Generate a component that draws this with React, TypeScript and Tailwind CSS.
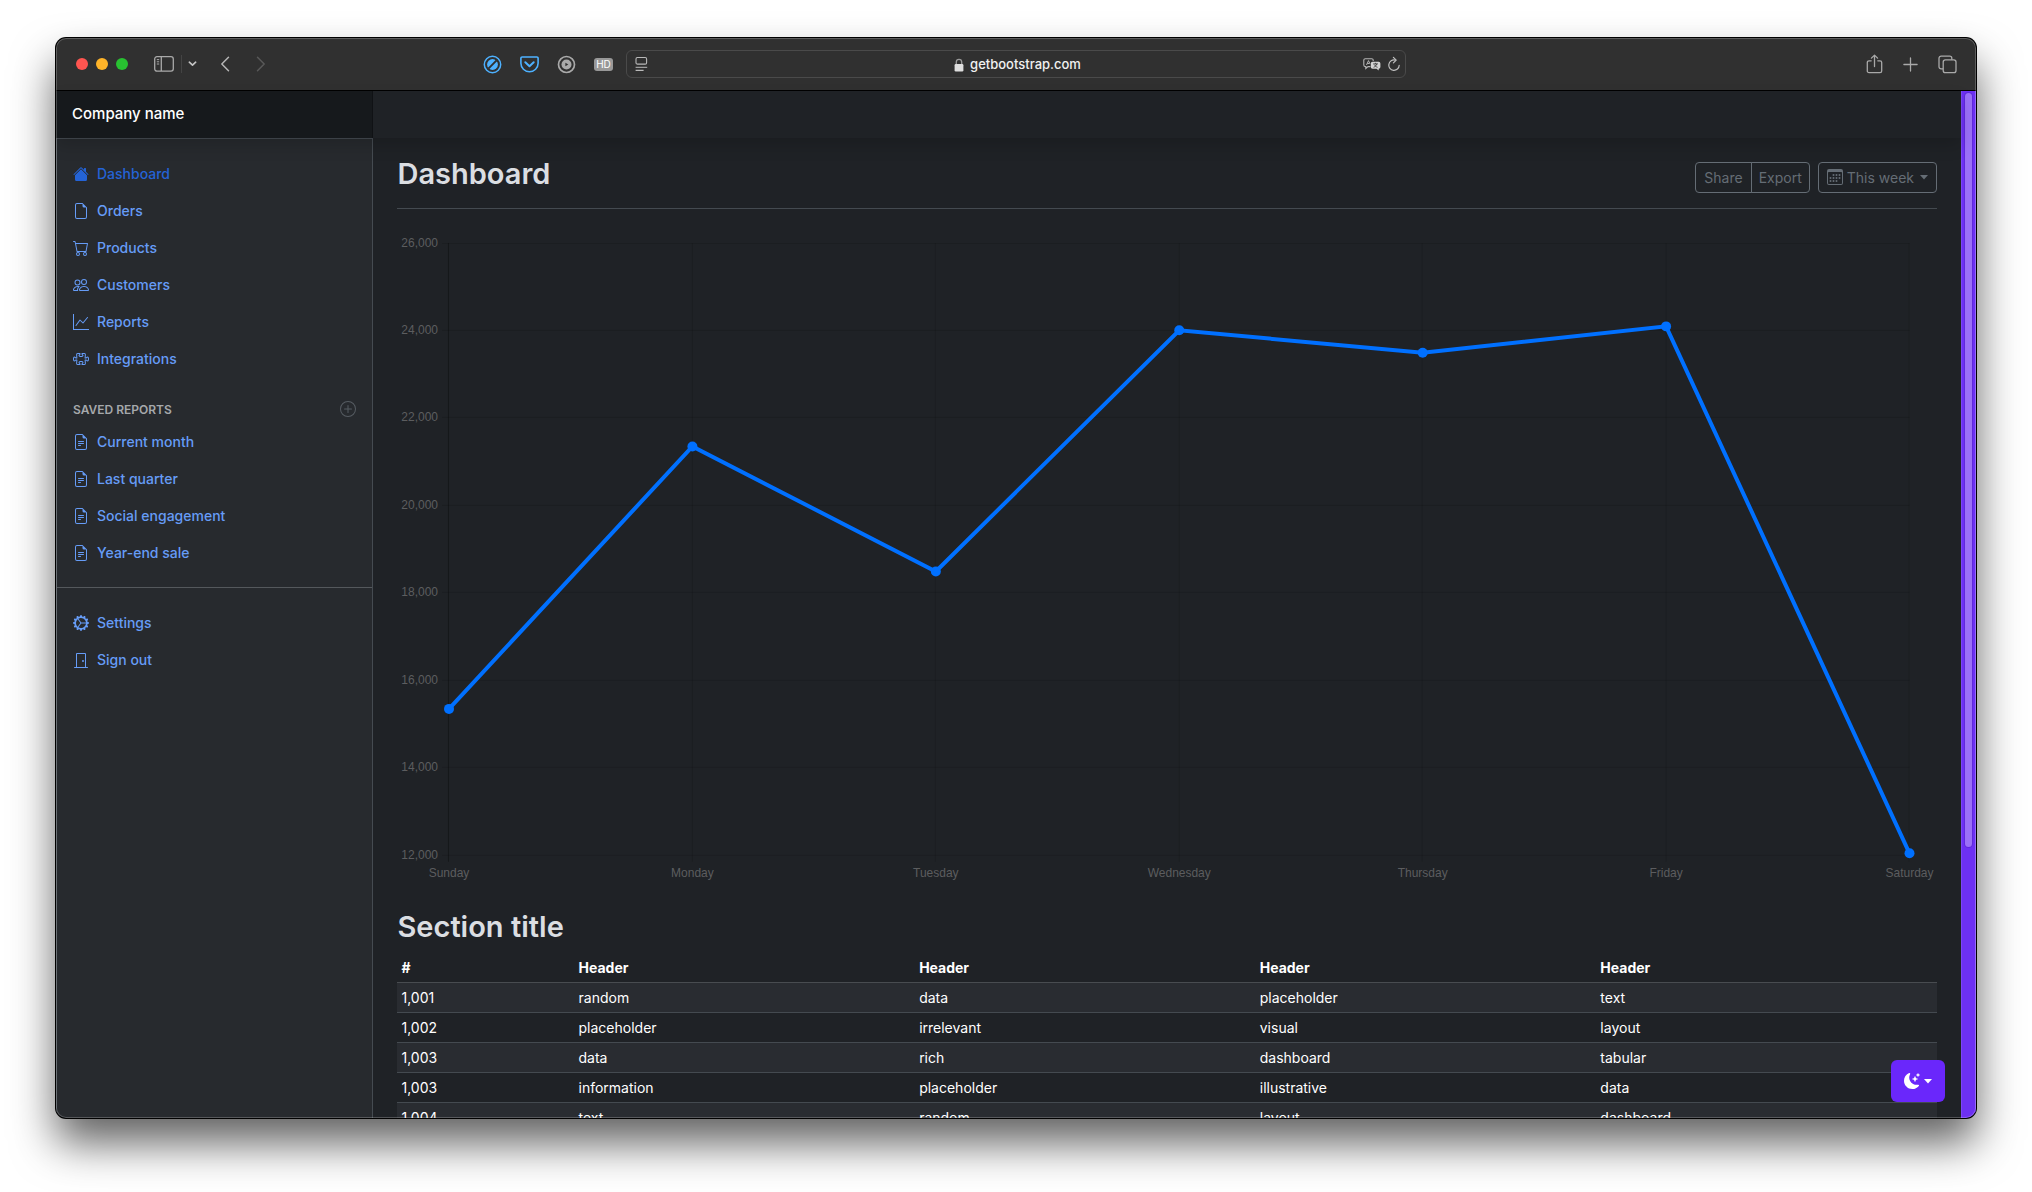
import type { ReactNode } from "react";
import {
  BsCalendar3,
  BsCart,
  BsDoorClosed,
  BsFileEarmark,
  BsFileEarmarkText,
  BsGearWideConnected,
  BsGraphUp,
  BsHouseFill,
  BsMoonStarsFill,
  BsPeople,
  BsPlusCircle,
  BsPuzzle,
} from "react-icons/bs";

type NavEntry = { label: string; icon: ReactNode; active?: boolean };

const mainNav: NavEntry[] = [
  { label: "Dashboard", icon: <BsHouseFill />, active: true },
  { label: "Orders", icon: <BsFileEarmark /> },
  { label: "Products", icon: <BsCart /> },
  { label: "Customers", icon: <BsPeople /> },
  { label: "Reports", icon: <BsGraphUp /> },
  { label: "Integrations", icon: <BsPuzzle /> },
];

const savedReports: NavEntry[] = [
  { label: "Current month", icon: <BsFileEarmarkText /> },
  { label: "Last quarter", icon: <BsFileEarmarkText /> },
  { label: "Social engagement", icon: <BsFileEarmarkText /> },
  { label: "Year-end sale", icon: <BsFileEarmarkText /> },
];

const accountNav: NavEntry[] = [
  { label: "Settings", icon: <BsGearWideConnected /> },
  { label: "Sign out", icon: <BsDoorClosed /> },
];

const rows = [
  ["1,001", "random", "data", "placeholder", "text"],
  ["1,002", "placeholder", "irrelevant", "visual", "layout"],
  ["1,003", "data", "rich", "dashboard", "tabular"],
  ["1,003", "information", "placeholder", "illustrative", "data"],
  ["1,004", "text", "random", "layout", "dashboard"],
];

const series = [
  { day: "Sunday", value: 15339 },
  { day: "Monday", value: 21345 },
  { day: "Tuesday", value: 18483 },
  { day: "Wednesday", value: 24003 },
  { day: "Thursday", value: 23489 },
  { day: "Friday", value: 24092 },
  { day: "Saturday", value: 12034 },
];

const ticks = [26000, 24000, 22000, 20000, 18000, 16000, 14000, 12000];

const chart = { left: 52, right: 1513, top: 10, bottom: 622 };

const xOf = (index: number) =>
  chart.left + (index * (chart.right - chart.left)) / (series.length - 1);
const yOf = (value: number) =>
  chart.top + ((26000 - value) * (chart.bottom - chart.top)) / 14000;

function LineChart() {
  return (
    <svg
      viewBox="0 0 1540 650"
      className="my-6 block h-auto w-full"
      role="img"
      aria-label="Orders per weekday"
    >
      <g stroke="#000" strokeOpacity="0.12" strokeWidth="1">
        {ticks.map((t) => (
          <line
            key={t}
            x1={chart.left - 7}
            x2={chart.right}
            y1={Math.floor(yOf(t)) + 0.5}
            y2={Math.floor(yOf(t)) + 0.5}
          />
        ))}
        {series.map((p, i) => (
          <line
            key={p.day}
            x1={Math.round(xOf(i)) - 0.5}
            x2={Math.round(xOf(i)) - 0.5}
            y1={chart.top}
            y2={chart.bottom + 7}
            strokeOpacity={i === 0 ? 0.3 : 0.12}
          />
        ))}
      </g>
      <g fill="#5c5d5f" className="font-['Liberation_Sans',sans-serif] text-[12px]">
        {ticks.map((t) => (
          <text key={t} x={chart.left - 11} y={Math.floor(yOf(t)) + 4} textAnchor="end">
            {t.toLocaleString("en-US")}
          </text>
        ))}
        {series.map((p, i) => (
          <text key={p.day} x={xOf(i)} y={chart.bottom + 22} textAnchor="middle">
            {p.day}
          </text>
        ))}
      </g>
      <polyline
        points={series.map((p, i) => `${xOf(i)},${yOf(p.value)}`).join(" ")}
        fill="none"
        stroke="#0070ff"
        strokeWidth="4"
      />
      {series.map((p, i) => (
        <circle key={p.day} cx={xOf(i)} cy={yOf(p.value)} r="5" fill="#0070ff" />
      ))}
    </svg>
  );
}

function NavList({ entries }: { entries: NavEntry[] }) {
  return (
    <ul className="flex flex-col">
      {entries.map((e) => (
        <li key={e.label}>
          <a
            href="#"
            aria-current={e.active ? "page" : undefined}
            className={
              e.active
                ? "flex items-center gap-2 px-4 py-2 text-sm leading-[21px] font-medium text-[#2463d6]"
                : "flex items-center gap-2 px-4 py-2 text-sm leading-[21px] font-medium text-[#669cf7]"
            }
          >
            <span className="text-base">{e.icon}</span>
            {e.label}
          </a>
        </li>
      ))}
    </ul>
  );
}

function BrowserToolbar() {
  return (
    <div className="grid h-[52px] shrink-0 grid-cols-[19fr_26fr_19fr] items-center bg-[#303030] text-[#a9a9a9]">
      <div className="flex items-center justify-between pr-[13px] pl-5">
        <div className="flex items-center">
          <div className="flex gap-2">
            <button aria-label="Close window" className="size-3 rounded-full bg-[#ff5550]" />
            <button aria-label="Minimize window" className="size-3 rounded-full bg-[#ffb429]" />
            <button aria-label="Zoom window" className="size-3 rounded-full bg-[#28c131]" />
          </div>
          <button aria-label="Show sidebar" className="ml-[26px]">
            <svg width="20" height="16" viewBox="0 0 20 16" fill="none" stroke="currentColor" strokeWidth="1.3">
              <rect x="0.7" y="0.7" width="18.6" height="14.4" rx="2.3" />
              <path d="M7.3 .7v14.4" />
              <path d="M2.8 3.6h2.4M2.8 5.8h2.4M2.8 8h2.4" strokeWidth="1" />
            </svg>
          </button>
          <span className="ml-[7px] h-[18px] w-px bg-[#444]" />
          <button aria-label="Sidebar options" className="ml-1.5">
            <svg width="9" height="6" viewBox="0 0 9 6" fill="none" stroke="#c4c4c4" strokeWidth="1.6" strokeLinecap="round" strokeLinejoin="round">
              <path d="M1.3 1.2 4.5 4.2 7.7 1.2" />
            </svg>
          </button>
          <button aria-label="Back" className="ml-[23px]">
            <svg width="10" height="16" viewBox="0 0 10 16" fill="none" stroke="#b4b4b4" strokeWidth="1.5" strokeLinecap="round" strokeLinejoin="round">
              <path d="M8.5 1.3 1.8 8l6.7 6.7" />
            </svg>
          </button>
          <button aria-label="Forward" className="ml-[26px]" disabled>
            <svg width="10" height="16" viewBox="0 0 10 16" fill="none" stroke="#585858" strokeWidth="1.5" strokeLinecap="round" strokeLinejoin="round">
              <path d="M1.5 1.3 8.2 8l-6.7 6.7" />
            </svg>
          </button>
        </div>
        <div className="flex items-center gap-[18px]">
          <button aria-label="Content blocker">
            <svg width="19" height="19" viewBox="0 0 19 19" fill="none">
              <circle cx="9.5" cy="9.5" r="8.2" stroke="#4db1ff" strokeWidth="1.5" />
              <circle cx="9.5" cy="9.5" r="5.4" fill="#4db1ff" />
              <path d="M5.4 13.6 13.6 5.4" stroke="#303030" strokeWidth="2" />
            </svg>
          </button>
          <button aria-label="Save to Pocket">
            <svg width="19" height="17" viewBox="0 0 19 17" fill="none" stroke="#4db1ff" strokeLinecap="round" strokeLinejoin="round">
              <path d="M.9 2.2v5a8.6 8.6 0 0 0 17.2 0v-5a1.2 1.2 0 0 0-1.2-1.2H2.1A1.2 1.2 0 0 0 .9 2.2z" strokeWidth="1.6" />
              <path d="M5.3 6.3 9.5 10.2l4.2-3.9" strokeWidth="2" />
            </svg>
          </button>
          <button aria-label="Media player">
            <svg width="19" height="19" viewBox="0 0 19 19" fill="none">
              <circle cx="9.5" cy="9.5" r="8" stroke="#a9a9a9" strokeWidth="1.7" />
              <circle cx="9.5" cy="9.5" r="5" fill="#a9a9a9" />
              <path d="M8.4 7.7v3.6l2.9-1.8z" fill="#303030" />
            </svg>
          </button>
          <button
            aria-label="HD video"
            className="h-[13px] w-[19px] rounded-[3px] bg-[#989898] text-center font-['Inter',sans-serif] text-[10px] leading-[13px] text-white"
          >
            HD
          </button>
        </div>
      </div>
      <div className="flex h-7 items-center rounded-md border border-[#4a4a4a] px-[5px]">
        <button aria-label="Page menu" className="ml-[3px]">
          <svg width="13" height="16" viewBox="0 0 13 16" fill="none" stroke="#b9b9b9">
            <rect x="1" y="1.5" width="10.6" height="6.6" rx="1.4" strokeWidth="1.1" />
            <path d="M.6 11.3h11.6" strokeWidth="1" />
            <path d="M.6 14.4h8" strokeWidth="1.1" />
          </svg>
        </button>
        <div className="flex flex-1 items-center justify-center gap-1.5 pt-0.5 pl-6 font-['Inter',sans-serif] text-[13px] font-medium text-[#f1f1f1]">
          <svg width="10" height="14" viewBox="0 0 10 14" fill="none">
            <path d="M2.3 7V4.1a2.7 2.7 0 0 1 5.4 0V7" stroke="#9a9a9a" strokeWidth="1.3" />
            <rect x="0.6" y="6" width="8.8" height="7.4" rx="1.2" fill="#dedede" />
          </svg>
          getbootstrap.com
        </div>
        <button aria-label="Translate">
          <svg width="18" height="13" viewBox="0 0 18 13" fill="none">
            <path d="M7.4 8.6H5L2.8 10.5V8.6H2.3A1.5 1.5 0 0 1 .8 7.1V2.2A1.5 1.5 0 0 1 2.3.7h6.4a1.5 1.5 0 0 1 1.5 1.5V3" stroke="#b4b4b4" strokeWidth="1.1" />
            <path d="M3.5 7 5.5 2.6 6.9 5.6M4.3 5.5h2.3" stroke="#b4b4b4" strokeWidth="1" />
            <path d="M9.5 3.7h6.2a1.7 1.7 0 0 1 1.7 1.7v3.7a1.7 1.7 0 0 1-1.7 1.7v1.8l-2.2-1.8h-4A1.7 1.7 0 0 1 7.8 9.1V5.4a1.7 1.7 0 0 1 1.7-1.7z" fill="#d4d4d4" />
            <path d="M10.2 5.9h4.8M12.6 4.8v1.1M10.6 9.3c1.6-.7 2.7-1.8 3.1-3.4M11.3 6.7c.7 1.3 1.7 2.1 3.3 2.6" stroke="#303030" strokeWidth=".8" />
          </svg>
        </button>
        <button aria-label="Reload page" className="ml-[7px]">
          <svg width="12" height="16" viewBox="0 0 12 16" fill="none" stroke="#bdbdbd" strokeWidth="1.2" strokeLinecap="round" strokeLinejoin="round">
            <path d="M7.2 4.1A5.2 5.2 0 1 0 11.2 9.3" />
            <path d="M5.4 1.3 8.2 4.1 5.4 6.9" />
          </svg>
        </button>
      </div>
      <div className="flex items-center justify-end gap-5 pr-[19px]">
        <button aria-label="Share page">
          <svg width="17" height="20" viewBox="0 0 17 20" fill="none" stroke="currentColor" strokeWidth="1.3" strokeLinecap="round" strokeLinejoin="round">
            <path d="M5.2 6.8H3A1.7 1.7 0 0 0 1.3 8.5v8.4A1.7 1.7 0 0 0 3 18.6h11a1.7 1.7 0 0 0 1.7-1.7V8.5A1.7 1.7 0 0 0 14 6.8h-2.2" />
            <path d="M8.5 12.5V1.2M5.4 4.1 8.5 1.1l3.1 3" />
          </svg>
        </button>
        <button aria-label="New tab">
          <svg width="15" height="15" viewBox="0 0 15 15" stroke="currentColor" strokeWidth="1.3" strokeLinecap="round">
            <path d="M7.5.9v13.2M.9 7.5h13.2" />
          </svg>
        </button>
        <button aria-label="Tab overview">
          <svg width="19" height="19" viewBox="0 0 19 19" fill="none" stroke="currentColor" strokeWidth="1.3">
            <rect x="5.2" y="4.8" width="12.8" height="12.8" rx="2.2" />
            <path d="M5.2 13.9H3.1A2.1 2.1 0 0 1 1 11.8V3.3a2.1 2.1 0 0 1 2.1-2.1h8.6a2.1 2.1 0 0 1 2.1 2.1v1.5" />
          </svg>
        </button>
      </div>
    </div>
  );
}

function Sidebar() {
  return (
    <aside className="flex w-1/6 shrink-0 flex-col border border-b-0 border-[#454b51] bg-[#272a2e] pt-4">
      <NavList entries={mainNav} />
      <div className="mt-6 mb-1.5 flex h-4 items-center justify-between px-4">
        <h2 className="pt-px text-xs leading-4 font-semibold text-[#a5a8ab] uppercase">Saved reports</h2>
        <a href="#" aria-label="Add a new report" className="text-base text-[#565c62]">
          <BsPlusCircle />
        </a>
      </div>
      <NavList entries={savedReports} />
      <hr className="my-4 border-[#54585c]" />
      <NavList entries={accountNav} />
    </aside>
  );
}

function Caret() {
  return (
    <svg width="8" height="5" viewBox="0 0 8 5" fill="currentColor" aria-hidden="true">
      <path d="M0 0h8L4 4.5z" />
    </svg>
  );
}

function DataTable() {
  return (
    <table className="w-full table-fixed border-collapse text-left text-sm leading-[21px] text-white">
      <colgroup>
        <col className="w-[11.5%]" />
        <col />
        <col />
        <col />
        <col />
      </colgroup>
      <thead>
        <tr className="border-b border-[#484c50]">
          {["#", "Header", "Header", "Header", "Header"].map((h, i) => (
            <th key={i} scope="col" className="p-1 font-bold">
              {h}
            </th>
          ))}
        </tr>
      </thead>
      <tbody>
        {rows.map((r, i) => (
          <tr key={i} className="border-b border-[#444a50] odd:bg-[#292c31]">
            {r.map((c, j) => (
              <td key={j} className="p-1">
                {c}
              </td>
            ))}
          </tr>
        ))}
      </tbody>
    </table>
  );
}

export default function App() {
  return (
    <div className="h-screen overflow-hidden bg-white px-14 pt-[38px] pb-[74px]">
      <div className="relative flex h-full flex-col overflow-hidden rounded-[10px] bg-[#1f2226] shadow-[0_0_0_1px_#000,0_25px_44px_rgba(0,0,0,0.62)]">
        <BrowserToolbar />
        <div className="flex min-h-0 flex-1 border-t border-black font-['Inter',sans-serif]">
          <div className="relative flex min-w-0 flex-1 flex-col">
            <header className="z-10 flex h-[47px] shrink-0 bg-[#1f2226] shadow-[0_8px_16px_rgba(0,0,0,0.15)]">
              <a
                href="#"
                className="flex w-1/6 shrink-0 items-center bg-[#16191c] px-4 text-[15px] font-medium text-white shadow-[inset_-1px_0_0_rgba(0,0,0,0.25)]"
              >
                Company name
              </a>
            </header>
            <div className="flex min-h-0 flex-1">
              <Sidebar />
              <main className="min-w-0 flex-1 overflow-hidden px-6">
                <div className="flex items-center justify-between border-b border-[#444a50] pt-4 pb-2">
                  <h1 className="mb-1.5 text-[29px] leading-10 font-semibold text-[#dbdee2]">Dashboard</h1>
                  <div className="flex gap-2 text-sm leading-[21px] text-[#656d75]">
                    <div className="flex">
                      <button className="rounded-l border border-[#656d75] px-2 py-1">Share</button>
                      <button className="-ml-px rounded-r border border-[#656d75] px-[7px] py-1">Export</button>
                    </div>
                    <button className="flex items-center gap-1 rounded border border-[#656d75] px-2 py-1">
                      <BsCalendar3 className="text-base" />
                      This week
                      <span className="ml-0.5">
                        <Caret />
                      </span>
                    </button>
                  </div>
                </div>
                <LineChart />
                <h2 className="mb-1.5 text-[29px] leading-10 font-semibold text-[#dbdee2]">Section title</h2>
                <DataTable />
              </main>
            </div>
            <button
              aria-label="Toggle theme (dark)"
              className="absolute right-4 bottom-4 z-20 flex h-[42px] w-[54px] items-center justify-center gap-1 rounded-md bg-[#6a27fb] text-white"
            >
              <BsMoonStarsFill className="text-base" />
              <Caret />
            </button>
          </div>
          <div className="w-[15px] shrink-0 border-x border-[#7c45f7] bg-[#6d30f3] px-[3px] pt-0.5">
            <div className="h-[73.6%] rounded-full bg-[#9b70f8] shadow-[0_0_0_1px_#5f28dd]" />
          </div>
        </div>
        <div className="pointer-events-none absolute inset-0 z-30 rounded-[10px] shadow-[inset_0_0_0_1px_rgba(255,255,255,0.22)]" />
      </div>
    </div>
  );
}
